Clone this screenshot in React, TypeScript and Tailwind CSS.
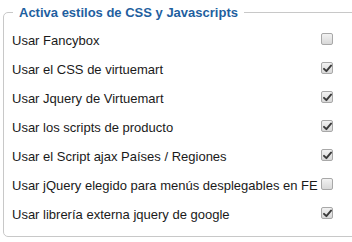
import React from "react";

const rows: { label: string; checked: boolean }[] = [
  { label: "Usar Fancybox", checked: false },
  { label: "Usar el CSS de virtuemart", checked: true },
  { label: "Usar Jquery de Virtuemart", checked: true },
  { label: "Usar los scripts de producto", checked: true },
  { label: "Usar el Script ajax Países / Regiones", checked: true },
  { label: "Usar jQuery elegido para menús desplegables en FE", checked: false },
  { label: "Usar librería externa jquery de google", checked: true },
];

function Box({ checked }: { checked: boolean }) {
  return (
    <span className="relative block w-[12px] h-[12px] rounded-[2px] border border-[#a8a8a8] bg-gradient-to-b from-[#f2f2f2] to-[#d8d8d8]">
      {checked && (
        <svg
          className="absolute left-[1px] top-[1px]"
          width="9"
          height="9"
          viewBox="0 0 9 9"
        >
          <path
            d="M1 4.8 L3.4 7.2 L8 1.6"
            fill="none"
            stroke="#3a3a3a"
            strokeWidth="1.9"
            strokeLinecap="round"
            strokeLinejoin="round"
          />
        </svg>
      )}
    </span>
  );
}

export default function App() {
  return (
    <div className="w-[352px] h-[242px] overflow-hidden bg-white" style={{ fontFamily: '"Liberation Sans", Arial, sans-serif' }}>
      <fieldset className="ml-[3px] mt-[5px] w-[420px] border border-[#c8c8c8] rounded-[5px] pl-[8px] pr-0 pb-[7px] pt-[6px] m-0">
        <legend className="ml-[1px] px-[6px] text-[13px] font-bold text-[#1f5f9f] leading-[15px]">
          Activa estilos de CSS y Javascripts
        </legend>
        <div className="grid grid-cols-[309px_auto]">
          {rows.map((r) => (
            <React.Fragment key={r.label}>
              <div className="h-[29px] flex items-center text-[13px] text-[#1a1a1a] whitespace-nowrap">
                {r.label}
              </div>
              <div className="h-[29px] flex items-center pb-[3px]">
                <Box checked={r.checked} />
              </div>
            </React.Fragment>
          ))}
        </div>
      </fieldset>
    </div>
  );
}
